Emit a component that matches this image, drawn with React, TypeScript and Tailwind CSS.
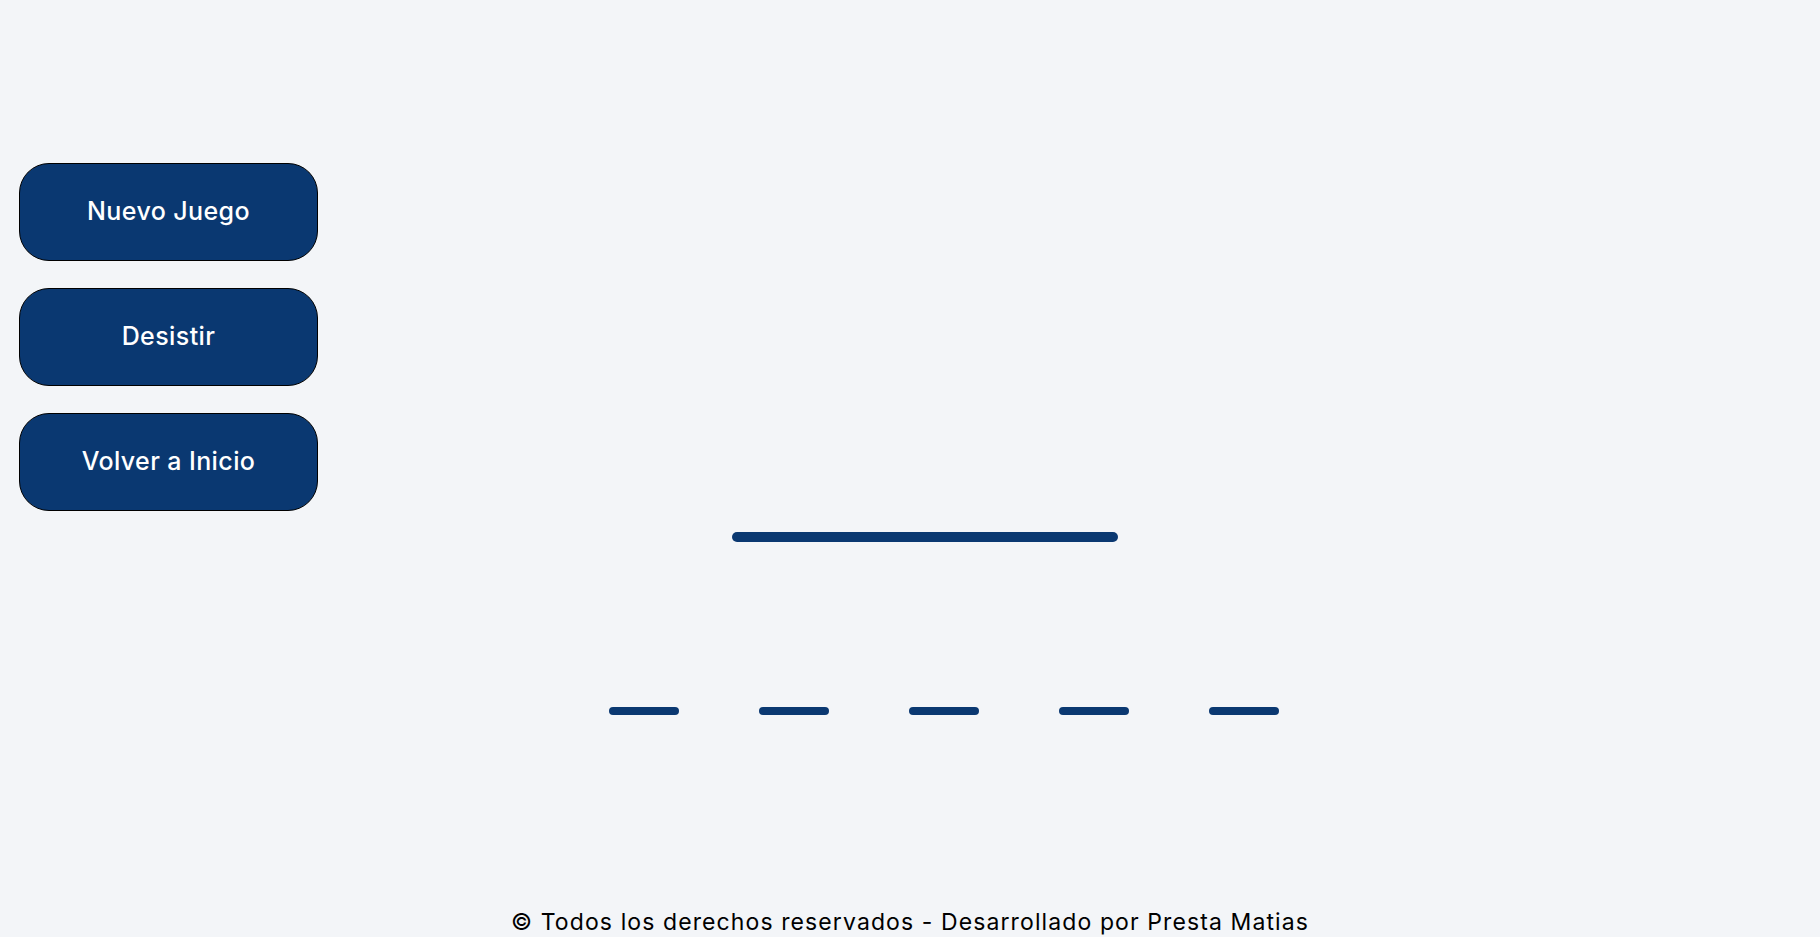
// Ahorcado: pantalla de juego
const letterSlots = [0, 1, 2, 3, 4]

const actions = ['Nuevo Juego', 'Desistir', 'Volver a Inicio']

function ActionButton({ label }: { label: string }) {
  return (
    <button
      type="button"
      className="w-[299px] h-[98px] rounded-[30px] border-[1.5px] border-black bg-[#0a3871] text-white text-[25px] font-medium tracking-[0.4px] flex items-center justify-center"
    >
      {label}
    </button>
  )
}

export default function App() {
  return (
    <div
      className="min-h-screen bg-[#f3f5f8] flex flex-col"
      style={{ fontFamily: 'Inter, "Noto Sans", sans-serif' }}
    >
      <div className="flex pt-[163px]">
        <aside className="ml-[19px] flex flex-col gap-[27px]">
          {actions.map((label) => (
            <ActionButton key={label} label={label} />
          ))}
        </aside>

        {/* tablero: horca + casillas de letras */}
        <main className="pl-[291px] pt-[369px] flex flex-col">
          <div className="ml-[123px] w-[386px] h-[10px] rounded-full bg-[#0a3871]" />
          <div className="mt-[165px] flex gap-[80px]">
            {letterSlots.map((i) => (
              <div key={i} className="w-[70px] h-[8px] rounded-full bg-[#0a3871]" />
            ))}
          </div>
        </main>
      </div>

      <footer className="mt-[193px] text-center text-[23px] leading-[28px] tracking-[1.1px] text-black">
        © Todos los derechos reservados - Desarrollado por Presta Matias
      </footer>
    </div>
  )
}
